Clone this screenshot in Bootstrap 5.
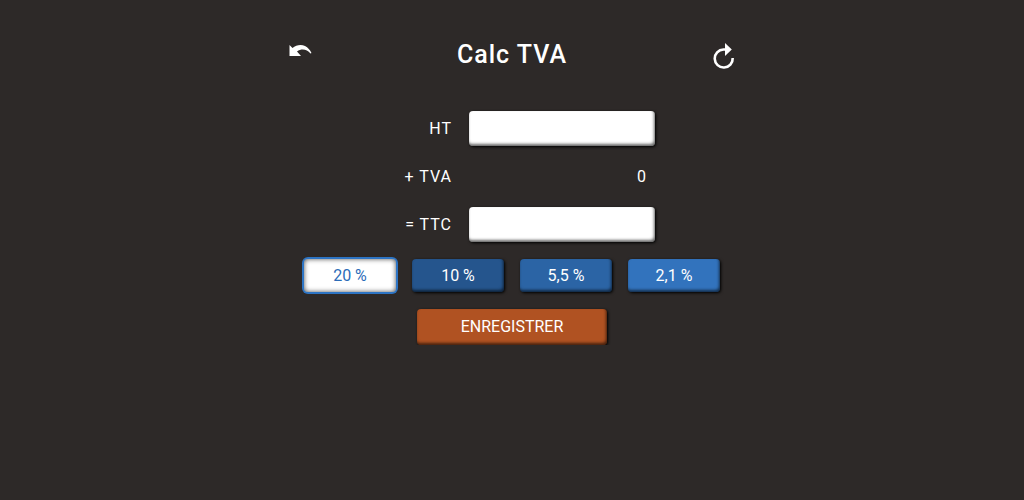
<!DOCTYPE html>
<html lang="fr">
<head>
<meta charset="utf-8">
<meta name="viewport" content="width=device-width, initial-scale=1">
<title>Calc TVA</title>
<link href="https://cdn.jsdelivr.net/npm/bootstrap@5.3.0/dist/css/bootstrap.min.css" rel="stylesheet">
<style>
body { background: #2d2928; color: #fff; font-family: Roboto, sans-serif; font-size: 16px; line-height: 24px; }
.calc { max-width: 448px; padding-top: 36px; }
.calc-title { font-size: 25px; line-height: 38px; font-weight: 500; letter-spacing: 1px; }
.icon-btn { line-height: 0; }
.fields { margin-top: 37px; row-gap: 13px; }
.field-row { min-height: 34px; column-gap: 17px; }
.field-label { width: 164px; text-align: right; letter-spacing: 1px; }
.field-box { width: 186px; height: 35px; padding: 0 9px; text-align: right; line-height: 35px; }
input.field-box, .rate, .save {
  border: 0; border-radius: 4px;
  box-shadow: 1px 1px 3px #000, inset -1px -2px 3px rgba(0, 0, 0, .6);
}
input.field-box, input.field-box:focus { background: #fff; color: #2d2928; }
.rates { margin-top: 17px; padding: 0 16px; gap: 16px; }
.rate { display: block; flex: 1 1 0; height: 33px; line-height: 33px; text-align: center; cursor: pointer; }
.rate-20 { background: #3273bd; }
.rate-10 { background: #25558d; }
.rate-55 { background: #2b64a5; }
.rate-21 { background: #3273bd; }
.btn-check:checked + .rate { background: #fff; color: #2b6cb8; box-shadow: 0 0 0 2px #2d74c4, inset 0 0 5px rgba(0, 0, 0, .7); }
.save { background: #b05222; color: #fff; width: 190px; height: 36px; margin-top: 17px; }
</style>
</head>
<body>
<main class="calc container-fluid px-0">
  <header class="d-flex justify-content-between align-items-start">
    <button type="button" class="icon-btn btn p-0 border-0" aria-label="Annuler">
      <svg width="24" height="32" viewBox="0 0 24 32" fill="#fff"><path d="M1.500 9 4.500 12C8 9 13 8 17 10C20 11.500 22 14 23.500 17L22.500 17.500C19 13.500 14 12 9 15.500L13 20 1.500 20Z"/></svg>
    </button>
    <h1 class="calc-title mb-0">Calc TVA</h1>
    <button type="button" class="icon-btn btn p-0 border-0" aria-label="Réinitialiser">
      <svg width="24" height="36" viewBox="0 0 24 36" fill="none"><path d="M15 13.500H11.500A9 9 0 1 0 20.700 22" stroke="#fff" stroke-width="2.600"/><path d="M13 7 19.800 13.500 13 20Z" fill="#fff"/></svg>
    </button>
  </header>
  <form onsubmit="return false">
    <div class="fields d-flex flex-column">
      <div class="field-row d-flex align-items-center">
        <label class="field-label" for="ht">HT</label>
        <input class="field-box" id="ht" type="text" inputmode="decimal">
      </div>
      <div class="field-row d-flex align-items-center">
        <label class="field-label" for="tva">+ TVA</label>
        <output class="field-box" id="tva">0</output>
      </div>
      <div class="field-row d-flex align-items-center">
        <label class="field-label" for="ttc">= TTC</label>
        <input class="field-box" id="ttc" type="text" inputmode="decimal">
      </div>
    </div>
    <div class="rates d-flex" role="radiogroup" aria-label="Taux de TVA">
      <input class="btn-check" type="radio" name="rate" id="r20" checked><label class="rate rate-20" for="r20">20 %</label>
      <input class="btn-check" type="radio" name="rate" id="r10"><label class="rate rate-10" for="r10">10 %</label>
      <input class="btn-check" type="radio" name="rate" id="r55"><label class="rate rate-55" for="r55">5,5 %</label>
      <input class="btn-check" type="radio" name="rate" id="r21"><label class="rate rate-21" for="r21">2,1 %</label>
    </div>
    <div class="text-center">
      <button type="submit" class="save">ENREGISTRER</button>
    </div>
  </form>
</main>
<script src="https://cdn.jsdelivr.net/npm/bootstrap@5.3.0/dist/js/bootstrap.bundle.min.js"></script>
</body>
</html>
